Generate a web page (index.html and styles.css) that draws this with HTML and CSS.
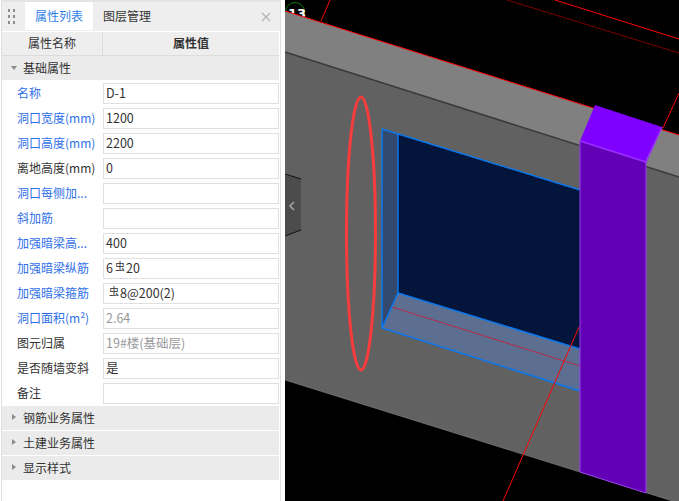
FILE: index.html
```html
<!DOCTYPE html>
<html lang="zh-CN">
<head>
  <meta charset="UTF-8" />
  <title>属性列表</title>
  <link rel="stylesheet" href="styles.css">
</head>
<body>
  <div class="app">
    <div class="side">
      <aside class="panel">
        <div class="tabs">
          <div class="grip"><i></i><i></i><i></i><i></i><i></i><i></i></div>
          <div class="tab active">属性列表</div>
          <div class="tab">图层管理</div>
          <svg class="close" width="10" height="10" viewBox="0 0 10 10"><path d="M1 1L9 9M9 1L1 9" stroke="#b4b4b4" stroke-width="1.3" fill="none"/></svg>
        </div>
        <div class="head">
          <div class="head-name">属性名称</div>
          <div class="head-value">属性值</div>
        </div>
        <div class="group"><span class="arrow-down"></span>基础属性</div>
        <div class="rows">
          <div class="row"><label class="blue">名称</label><div class="val">D-1</div></div>
          <div class="row"><label class="blue">洞口宽度(mm)</label><div class="val">1200</div></div>
          <div class="row"><label class="blue">洞口高度(mm)</label><div class="val">2200</div></div>
          <div class="row"><label>离地高度(mm)</label><div class="val">0</div></div>
          <div class="row"><label class="blue">洞口每侧加...</label><div class="val"></div></div>
          <div class="row"><label class="blue">斜加筋</label><div class="val"></div></div>
          <div class="row"><label class="blue">加强暗梁高...</label><div class="val">400</div></div>
          <div class="row"><label class="blue">加强暗梁纵筋</label><div class="val">6<span class="rebar">虫</span>20</div></div>
          <div class="row"><label class="blue">加强暗梁箍筋</label><div class="val"><span class="rebar first">虫</span>8@200(2)</div></div>
          <div class="row"><label class="blue">洞口面积(m²)</label><div class="val muted">2.64</div></div>
          <div class="row"><label>图元归属</label><div class="val muted">19#楼(基础层)</div></div>
          <div class="row"><label>是否随墙变斜</label><div class="val">是</div></div>
          <div class="row"><label>备注</label><div class="val"></div></div>
        </div>
        <div class="group closed"><span class="arrow-right"></span>钢筋业务属性</div>
        <div class="group closed"><span class="arrow-right"></span>土建业务属性</div>
        <div class="group closed"><span class="arrow-right"></span>显示样式</div>
      </aside>
    </div>
    <main class="view">
      <svg class="scene" width="394" height="501" viewBox="285 0 394 501">
        <rect x="285" y="0" width="394" height="501" fill="#000"/>
        <!-- grid lines behind the wall -->
        <path d="M507 0L679 53" stroke="#7a0000" stroke-width="1" fill="none"/>
        <path d="M555 0L679 39" stroke="#ff0000" stroke-width="1" fill="none"/>
        <path d="M321 21L330 0" stroke="#ff0000" stroke-width="1" fill="none"/>
        <path d="M663 128L679 93" stroke="#ff0000" stroke-width="1" fill="none"/>
        <circle cx="295" cy="12" r="9.500" fill="none" stroke="#0c7a12" stroke-width="1"/>
        <text x="288" y="18" class="axis">13</text>
        <!-- wall top and front -->
        <path d="M285 11L679 135V177L285 52Z" fill="#808080"/>
        <path d="M285 52L679 177V503L285 380Z" fill="#616161"/>
        <path d="M285 11L679 135" stroke="#ff0000" stroke-width="1" fill="none"/>
        <path d="M285 52L679 177" stroke="#3a3a3a" stroke-width="1.500" fill="none"/>
        <path d="M285 380L679 503" stroke="#8a8a8a" stroke-width="0.600" fill="none"/>
        <!-- opening -->
        <path d="M382 129L580 190V391L382 328Z" fill="#03153a"/>
        <path d="M382 129L398 134V293L382 328Z" fill="#33496e"/>
        <path d="M398 293L580 349V391L382 328Z" fill="#5c6f90"/>
        <path d="M392 307L580 366" stroke="#b8284a" stroke-width="1" fill="none"/>
        <path d="M382 129L580 190M382 129V328L580 391M398 134V293L580 349M398 293L382 328" stroke="#0a78ee" stroke-width="1.500" fill="none"/>
        <!-- axis line in front of the wall -->
        <path d="M503 501L579 327" stroke="#ff0000" stroke-width="1" fill="none"/>
        <!-- column -->
        <path d="M580 141L595 105L662 127L645 162Z" fill="#8000ff"/>
        <path d="M580 141L646 162V493L580 472Z" fill="#6100b4"/>
        <path d="M580 141L646 162L662 127" stroke="#9a30ff" stroke-width="1.500" fill="none"/>
        <path d="M580 141V472L646 493V162" stroke="#9a3cf0" stroke-width="1" fill="none"/>
        <!-- red mark -->
        <ellipse cx="361" cy="233.500" rx="14.500" ry="136.500" fill="none" stroke="#f63c3c" stroke-width="3"/>
      </svg>
      <svg class="handle" width="16" height="62" viewBox="0 0 16 62">
        <path d="M0 0L16 5V56L0 62Z" fill="#4c4c4c"/>
        <path d="M0 0L16 5M16 56L0 62" stroke="#111" stroke-width="1" fill="none"/>
        <path d="M9 28L5 32L9 36" stroke="#a8a8a8" stroke-width="1.500" fill="none"/>
      </svg>
    </main>
  </div>
</body>
</html>
```
FILE: styles.css
```css
* {
  margin: 0; padding: 0; box-sizing: border-box;
}
body {
  background: #fff; color: #333;
  font-family: "Noto Sans CJK SC", "Liberation Sans", sans-serif;
  font-size: 12px;
}
.app {
  display: flex;
  width: 679px; height: 501px;
  overflow: hidden;
}
.side {
  width: 285px; height: 501px;
  flex: none;
  padding-left: 1px;
  background: #fff;
}
.panel {
  width: 280px; height: 501px;
  background: #fff;
  border-left: 1px solid #e0e0e0;
  border-right: 1px solid #e0e0e0;
}
.tabs {
  display: flex; align-items: flex-start;
  height: 32px;
  background: #eeeeee;
  border-top: 2px solid #e4e4e4;
  border-bottom: 1px solid #fff;
  position: relative;
}
.grip {
  display: grid;
  grid-template-columns: 2px 2px;
  gap: 3px 3px;
  width: 23px;
  padding: 7px 0 0 6px;
}
.grip i {
  width: 2px; height: 3px; background: #8f8f8f;
}
.tab {
  width: 68px; height: 28px;
  line-height: 27px;
  text-align: center;
  white-space: nowrap;
}
.tab.active {
  background: #fff; color: #2f7fe8;
}
.close {
  position: absolute; right: 9px; top: 10px;
}
.head {
  display: flex;
  height: 24px; line-height: 22px;
  width: 277px;
  background: #eeeeee;
  border-bottom: 1px solid #dcdcdc;
  text-align: center;
}
.head-name {
  width: 101px;
  border-right: 1px solid #dcdcdc;
}
.head-value {
  flex: 1;
  font-weight: bold;
}
.group {
  display: flex; align-items: center;
  width: 277px; height: 24px;
  background: #ebebeb;
  padding: 0 0 2px 21px;
  position: relative;
}
.group.closed {
  margin-bottom: 1px;
}
.arrow-down {
  position: absolute; left: 9px; top: 10px;
  border-left: 3px solid transparent;
  border-right: 3px solid transparent;
  border-top: 4px solid #8c8c8c;
}
.arrow-right {
  position: absolute; left: 10px; top: 8px;
  border-top: 3px solid transparent;
  border-bottom: 3px solid transparent;
  border-left: 4px solid #8c8c8c;
}
.rows {
  padding-top: 1px;
}
.row {
  display: flex; align-items: center;
  height: 25px;
}
.row label {
  width: 101px; flex: none;
  padding: 0 0 2px 15px;
  white-space: nowrap;
}
.row label.blue {
  color: #2f6fe8;
}
.val {
  flex: 1;
  height: 21px; line-height: 18px;
  margin-right: 1px;
  padding-left: 2px;
  border: 1px solid #e0e0e0;
  background: #fff;
  font-size: 12.500px;
  white-space: nowrap;
}
.val.muted {
  color: #999;
}
.rebar {
  font-size: 10px;
  position: relative; top: -3px;
  margin: 0 1px 0 2px;
}
.rebar.first {
  margin-left: 3px;
}
.view {
  position: relative;
  width: 394px; height: 501px;
  flex: none;
}
.scene {
  display: block;
}
.axis {
  font-family: "DejaVu Sans", sans-serif;
  font-size: 13px;
  font-weight: bold;
  fill: #fff;
}
.handle {
  position: absolute; left: 0; top: 174px;
}
```
